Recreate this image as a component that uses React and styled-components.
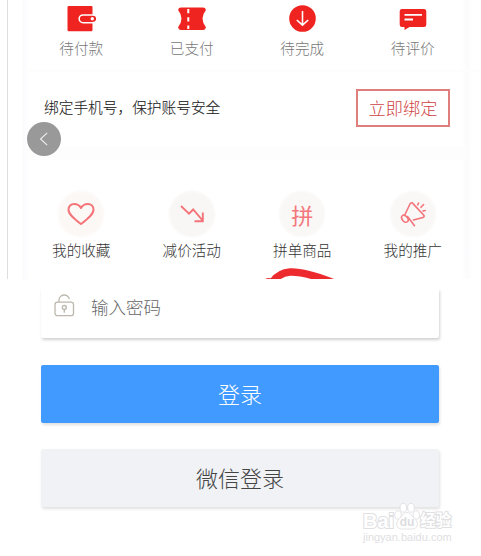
import React from "react";
import styled, { createGlobalStyle } from "styled-components";

const orders = [
  { label: "待付款", icon: <WalletIcon /> },
  { label: "已支付", icon: <TicketIcon /> },
  { label: "待完成", icon: <DownIcon /> },
  { label: "待评价", icon: <CommentIcon /> },
];

const services = [
  { label: "我的收藏", icon: <HeartIcon />, tint: "#fcf8f6" },
  { label: "减价活动", icon: <TrendIcon />, tint: "#f9f7f5" },
  { label: "拼单商品", icon: "拼", tint: "#faf8f6" },
  { label: "我的推广", icon: <HornIcon />, tint: "#faf8f7" },
];

const App = () => {
  return (
    <Page>
      <GlobalStyle />
      <Profile>
        <OrderCard>
          <Grid>
            {orders.map((item) => (
              <Item key={item.label}>
                {item.icon}
                <OrderText>{item.label}</OrderText>
              </Item>
            ))}
          </Grid>
        </OrderCard>
        <BindCard>
          <BindText>绑定手机号，保护账号安全</BindText>
          <BindButton>立即绑定</BindButton>
        </BindCard>
        <ServiceCard>
          <Grid>
            {services.map((item) => (
              <Item key={item.label}>
                <ServiceIcon $tint={item.tint}>{item.icon}</ServiceIcon>
                <ServiceText>{item.label}</ServiceText>
              </Item>
            ))}
          </Grid>
        </ServiceCard>
        <BackButton aria-label="返回">
          <svg width="10" height="16" viewBox="0 0 10 16" fill="none" stroke="#eee" strokeWidth="1.1">
            <path d="M8.2 1.8 1.5 8l6.7 6.2" />
          </svg>
        </BackButton>
        <Scribble viewBox="0 0 74 16">
          <path d="M1 13.500q3-3 7-.5" strokeWidth="3.500" />
          <path d="M8 15C13 7 19 4.500 26 4c13-.5 29 5 44 11" />
        </Scribble>
      </Profile>
      <Login>
        <PasswordBox>
          <LockIcon />
          <PasswordText>输入密码</PasswordText>
        </PasswordBox>
        <LoginButton>登录</LoginButton>
        <WechatButton>微信登录</WechatButton>
      </Login>
      <Watermark />
    </Page>
  );
};

export default App;

function WalletIcon() {
  return (
    <svg width="30" height="28" viewBox="0 0 30 28">
      <path fill="#ef2420" d="M2.700 2h22.800q1 0 1 1v7.200H17a4.600 4.600 0 0 0 0 9.200h9.500V26q0 1.200-1.200 1.200H2.700q-1.200 0-1.200-1.200V3.200Q1.500 2 2.700 2z" />
      <path fill="#ef2420" d="M17 11.700h10a3.100 3.100 0 0 1 0 6.200H17a3.100 3.100 0 0 1 0-6.200z" />
      <circle cx="26.300" cy="14.800" r="1.700" fill="#fff" />
    </svg>
  );
}

function TicketIcon() {
  return (
    <svg width="30" height="28" viewBox="0 0 30 28">
      <path fill="#ef2420" d="M4.200 3.500h21.600q3 0 3 2.800-3.300 4.200-3.300 8.200t3.300 8.400q0 3-3 3H4.200q-3 0-3-3 3.300-4.200 3.300-8.400T1.200 6.300q0-2.800 3-2.800z" />
      <path stroke="#fff" strokeWidth="2" strokeDasharray="4.200 4" d="M11.300 5v20" />
    </svg>
  );
}

function DownIcon() {
  return (
    <svg width="30" height="28" viewBox="0 0 30 28" fill="none">
      <circle cx="15.500" cy="14.500" r="13.300" fill="#ef2420" />
      <path stroke="#fff" strokeWidth="1.600" d="M15.500 7v14M9.800 16l5.700 5.200 5.700-5.200" />
    </svg>
  );
}

function CommentIcon() {
  return (
    <svg width="30" height="28" viewBox="0 0 30 28" fill="none">
      <path fill="#ef2420" d="M4 5h22q2.300 0 2.300 2.300v13.400q0 2.300-2.300 2.300H11.500L6.500 26v-3H4q-2.300 0-2.300-2.300V7.300Q1.700 5 4 5z" />
      <path stroke="#fff" strokeWidth="1.800" d="M6.500 10.800H24M6.500 15.500H15" />
    </svg>
  );
}

function HeartIcon() {
  return (
    <svg width="30" height="26" viewBox="0 0 30 26" fill="none" stroke="#f47479" strokeWidth="2" strokeLinejoin="round">
      <path d="M15 23C9.500 18.800 2.500 13.700 2.500 8.700c0-3.400 2.400-5.700 5.700-5.700 2.900 0 5.600 1.800 6.800 4 1.200-2.200 3.900-4 6.800-4 3.300 0 5.700 2.300 5.700 5.700 0 5-7 10.100-12.500 14.300z" />
    </svg>
  );
}

function TrendIcon() {
  return (
    <svg width="28" height="22" viewBox="0 0 28 22" fill="none" stroke="#f47479" strokeWidth="1.900">
      <path d="m3 3 8 7.700 4.200-4.200L25 18M16.500 18.200h8.300V9.500" />
    </svg>
  );
}

// megaphone tilted towards the upper right
function HornIcon() {
  return (
    <svg width="28" height="28" viewBox="0 0 28 28" fill="none" stroke="#f47479" strokeWidth="1.600" strokeLinecap="round" strokeLinejoin="round">
      <path d="M5.500 15.500 11 4q1.400-2.200 3-.4l10.800 11.600q1 1.500-.8 2.200L14.500 20" />
      <path d="M3.500 15.500c-1.500 1.300-1.100 3.300.5 5.200 1.600 1.900 3.500 2 4.700.8 1.200-1.300.5-3-1-4.700-1.400-1.500-3-2.500-4.200-1.300zM8.500 16.500l7 9.200M18.700 4.800l.9-1.800M22 7.300l2.600-2.800M24 11l2.200-.5" />
    </svg>
  );
}

function LockIcon() {
  return (
    <svg width="22" height="24" viewBox="0 0 22 24" fill="none" stroke="#bdb8ae" strokeWidth="1.300">
      <rect x="1" y="8.200" width="18.500" height="13.500" rx="2.500" />
      <path d="M5 8.200V6a5.200 5.200 0 0 1 10.300-.8M10.300 15.500v3.300" />
      <circle cx="10.300" cy="13.500" r="2" />
    </svg>
  );
}

function Watermark() {
  return (
    <Mark>
      <MarkRow>
        <MarkText>Bai</MarkText>
        <Paw viewBox="0 0 26 29">
          <ellipse cx="4" cy="13" rx="3.300" ry="4.200" />
          <ellipse cx="9.300" cy="5.800" rx="3.300" ry="4.400" />
          <ellipse cx="17" cy="5.800" rx="3.300" ry="4.400" />
          <ellipse cx="22.300" cy="13" rx="3.200" ry="4.200" />
          <path d="M13 10.500c4 0 5.500 4.500 8.200 6.800 3.800 3.500 2.500 9.700-2.700 9.700h-11c-5.200 0-6.500-6.200-2.700-9.700C7.500 15 9 10.500 13 10.500z" />
          <text x="13" y="24">du</text>
        </Paw>
        <MarkText $small>经验</MarkText>
      </MarkRow>
      <MarkUrl>jingyan.baidu.com</MarkUrl>
    </Mark>
  );
}

const GlobalStyle = createGlobalStyle`
  body {
    margin: 0;
    background-color: #fff;
    font-family: "Noto Sans CJK SC", sans-serif;
  }
  * {
    box-sizing: border-box;
  }
  button {
    font-family: inherit;
    padding: 0;
  }
  svg {
    display: block;
    flex-shrink: 0;
  }
`;

const Page = styled.div`
  position: relative;
  width: 481px;
  height: 556px;
  overflow: hidden;
`;

const Profile = styled.section`
  position: relative;
  height: 279px;
  margin-left: 7px;
  padding-left: 18px;
  border-left: 1px solid #dedede;
  overflow: hidden;
  background: linear-gradient(90deg, #fff 14px, #fbfbfe 15px, #fff 22px, #fff 454px, #fbfbfd 459px, #fff 464px);
`;

const Grid = styled.div`
  display: grid;
  grid-template-columns: repeat(4, 110.5px);
`;

const OrderCard = styled.div`
  height: 72px;
  padding-top: 4px;
  border-bottom: 2px solid #fdfdfe;
`;

const Item = styled.div`
  display: flex;
  flex-direction: column;
  align-items: center;
`;

const OrderText = styled.span`
  margin-top: 5px;
  font-size: 14.6px;
  font-weight: 300;
  line-height: 22px;
  color: #777;
`;

const BindCard = styled.div`
  display: flex;
  align-items: center;
  justify-content: space-between;
  width: 424px;
  height: 75px;
  padding: 0 0 4px 18px;
`;

const BindText = styled.span`
  margin-top: -3px;
  font-size: 14.7px;
  font-weight: 300;
  color: #222;
  -webkit-text-stroke: 0.1px #222;
`;

const BindButton = styled.button`
  width: 94px;
  height: 38px;
  border: 2px solid #df7f7c;
  background-color: #fff;
  font-size: 17.2px;
  font-weight: 300;
  color: #cf3f43;
`;

const ServiceCard = styled.div`
  width: 440px;
  height: 132px;
  padding-top: 42px;
  border-top: 1px solid #fdfdfe;
  box-shadow: inset 0 18px 0 -6px #fdfdfe;
`;

const ServiceIcon = styled.div`
  display: flex;
  align-items: center;
  justify-content: center;
  width: 48px;
  height: 48px;
  padding-bottom: 1px;
  border-radius: 50%;
  background: radial-gradient(circle, ${(props) => props.$tint} 62%, #fff 74%);
  font-size: 22px;
  line-height: 42px;
  color: #f4777c;
`;

const ServiceText = styled.span`
  margin-top: 1px;
  font-size: 14.6px;
  font-weight: 300;
  line-height: 22px;
  color: #333;
`;

const BackButton = styled.button`
  position: absolute;
  top: 122px;
  left: 19px;
  display: flex;
  align-items: center;
  justify-content: center;
  width: 34px;
  height: 34px;
  border: none;
  border-radius: 50%;
  background-color: #999;
`;

const Scribble = styled.svg`
  position: absolute;
  left: 256px;
  bottom: -5px;
  width: 74px;
  height: 16px;
  fill: none;
  stroke: #ed2b2e;
  stroke-width: 7.5;
`;

const Login = styled.section`
  display: flex;
  flex-direction: column;
  width: 398px;
  margin: 10px 0 0 41px;
`;

const PasswordBox = styled.div`
  display: flex;
  align-items: center;
  height: 49px;
  padding: 0 0 15px 13px;
  border-radius: 0 0 2px 2px;
  box-shadow: 1px 2px 3px rgba(0, 0, 0, 0.18);
  clip-path: inset(0 -6px -6px -6px);
`;

const PasswordText = styled.span`
  margin-top: 1px;
  margin-left: 15px;
  font-size: 17.5px;
  font-weight: 300;
  color: #666;
`;

const LoginButton = styled.button`
  height: 58px;
  margin-top: 27px;
  padding-bottom: 2px;
  border: none;
  border-radius: 2px;
  background-color: #409aff;
  box-shadow: 1px 2px 3px rgba(0, 0, 0, 0.12);
  font-size: 22px;
  font-weight: 300;
  color: #fff;
`;

const WechatButton = styled(LoginButton)`
  margin-top: 26px;
  background-color: #f0f2f5;
  color: #444;
`;

const Mark = styled.div`
  position: absolute;
  left: 363px;
  top: 501px;
  width: 92px;
`;

const MarkRow = styled.div`
  display: flex;
  align-items: flex-end;
  height: 30px;
`;

const MarkText = styled.span`
  font-family: "Liberation Sans", "Noto Sans CJK SC", sans-serif;
  font-size: ${(props) => (props.$small ? "15.5px" : "20px")};
  font-weight: bold;
  line-height: ${(props) => (props.$small ? "20px" : "19px")};
  color: #fff;
  -webkit-text-stroke: 2px #e0e0e2;
  paint-order: stroke fill;
`;

const Paw = styled.svg`
  width: 26px;
  height: 29px;
  fill: #fff;
  stroke: #dcdcdf;
  stroke-width: 0.8;

  text {
    font: bold 12px "Liberation Sans", sans-serif;
    text-anchor: middle;
    fill: #dcdcde;
    stroke: none;
  }
`;

const MarkUrl = styled.div`
  font-family: "Liberation Sans", sans-serif;
  font-size: 11px;
  line-height: 13px;
  color: #e0e0e2;
`;
